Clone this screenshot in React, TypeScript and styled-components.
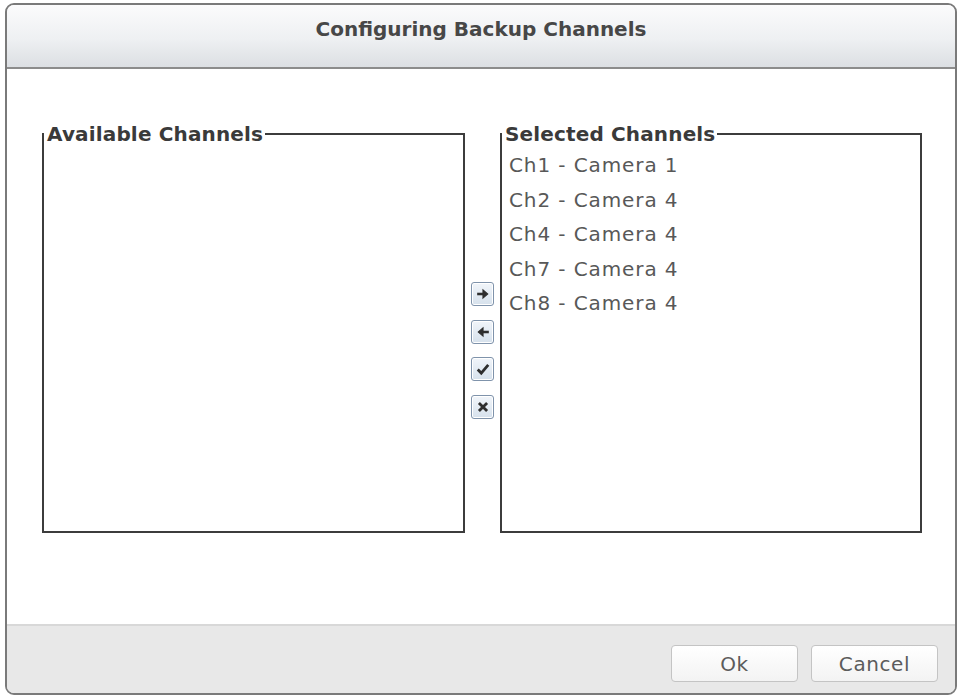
import React from 'react';
import styled, { createGlobalStyle } from 'styled-components';

const GlobalStyle = createGlobalStyle`
  html, body {
    margin: 0;
    padding: 0;
    background: #ffffff;
    font-family: "DejaVu Sans", Verdana, sans-serif;
  }
`;

const Page = styled.div`
  width: 959px;
  height: 698px;
  padding: 3px 2px 0 5px;
  box-sizing: border-box;
  overflow: hidden;
`;

const Dialog = styled.div`
  height: 692px;
  border: 2px solid #7a7a7a;
  border-radius: 9px;
  box-sizing: border-box;
  display: flex;
  flex-direction: column;
  overflow: hidden;
  background: #ffffff;
`;

const Header = styled.div`
  height: 64px;
  flex-shrink: 0;
  display: flex;
  align-items: flex-start;
  justify-content: center;
  padding-top: 12px;
  box-sizing: border-box;
  background: linear-gradient(to bottom, #fbfbfc 0%, #eef0f2 55%, #dcdfe3 100%);
  border-bottom: 2px solid #8c8c8c;
`;

const Title = styled.h1`
  margin: 0;
  font-size: 20px;
  font-weight: bold;
  color: #474747;
`;

const Body = styled.div`
  flex: 1;
  display: flex;
  align-items: flex-start;
  padding: 53px 33px 0 35px;
  gap: 6px;
`;

const Box = styled.fieldset<{ $width: number }>`
  margin: 0;
  width: ${(p) => p.$width}px;
  height: 411px;
  flex-shrink: 0;
  box-sizing: border-box;
  border: 2px solid #3c3c3c;
  padding: 0 0 0 7px;
  min-width: 0;
`;

const Legend = styled.legend`
  padding: 0 2px 0 3px;
  margin-left: -7px;
  font-size: 20px;
  font-weight: bold;
  color: #3a3a3a;
  letter-spacing: 0.15px;
`;

const ItemList = styled.ul`
  list-style: none;
  margin: 5px 0 0;
  padding: 0;
`;

const Item = styled.li`
  font-size: 20px;
  color: #585858;
  height: 34.5px;
  line-height: 28px;
  letter-spacing: 0.9px;
`;

const Mover = styled.div`
  width: 23px;
  flex-shrink: 0;
  display: flex;
  flex-direction: column;
  align-items: center;
  gap: 13.5px;
  padding-top: 160px;
`;

const MoveButton = styled.button`
  width: 23px;
  height: 24px;
  padding: 0;
  display: flex;
  align-items: center;
  justify-content: center;
  border: 1px solid #7f93ab;
  border-radius: 3px;
  background: linear-gradient(to bottom, #f1f5fa, #d6e1ec);
  box-shadow: inset 0 0 0 1px #ffffff;
  cursor: pointer;
`;

const Footer = styled.div`
  height: 69px;
  flex-shrink: 0;
  display: flex;
  justify-content: flex-end;
  align-items: flex-start;
  gap: 13px;
  padding: 19px 17px 0 0;
  box-sizing: border-box;
  background: #e8e8e8;
  border-top: 2px solid #d8d8d8;
`;

const FooterButton = styled.button`
  width: 127px;
  height: 37px;
  border: 1px solid #c4c4c4;
  border-radius: 4px;
  background: linear-gradient(to bottom, #ffffff, #f3f3f3);
  font-family: "DejaVu Sans", Verdana, sans-serif;
  font-size: 20px;
  letter-spacing: 0.6px;
  color: #5c5c5c;
  cursor: pointer;
`;

const Glyph = ({ kind }: { kind: string }) => {
  const stroke = '#2e2e2e';
  if (kind === 'right')
    return (
      <svg width="14" height="14" viewBox="0 0 12 12">
        <path d="M1 6h7" stroke={stroke} strokeWidth="2.2" />
        <path d="M6 2.5L10 6L6 9.5Z" fill={stroke} stroke={stroke} strokeWidth="1" />
      </svg>
    );
  if (kind === 'left')
    return (
      <svg width="14" height="14" viewBox="0 0 12 12">
        <path d="M4 6h7" stroke={stroke} strokeWidth="2.2" />
        <path d="M6 2.5L2 6L6 9.5Z" fill={stroke} stroke={stroke} strokeWidth="1" />
      </svg>
    );
  if (kind === 'check')
    return (
      <svg width="14" height="14" viewBox="0 0 12 12">
        <path d="M1.5 6.5L4.5 9.5L10.5 2.5" stroke={stroke} strokeWidth="2.4" fill="none" />
      </svg>
    );
  return (
    <svg width="14" height="14" viewBox="0 0 12 12">
      <path d="M2.5 2.5L9.5 9.5M9.5 2.5L2.5 9.5" stroke={stroke} strokeWidth="2.4" fill="none" />
    </svg>
  );
};

const selected = [
  'Ch1 - Camera 1',
  'Ch2 - Camera 4',
  'Ch4 - Camera 4',
  'Ch7 - Camera 4',
  'Ch8 - Camera 4',
];

const App = () => {
  return (
    <Page>
      <GlobalStyle />
      <Dialog>
        <Header>
          <Title>Configuring Backup Channels</Title>
        </Header>
        <Body>
          <Box $width={423}>
            <Legend>Available Channels</Legend>
          </Box>
          <Mover>
            {['right', 'left', 'check', 'close'].map((k) => (
              <MoveButton key={k}>
                <Glyph kind={k} />
              </MoveButton>
            ))}
          </Mover>
          <Box $width={422}>
            <Legend>Selected Channels</Legend>
            <ItemList>
              {selected.map((s) => (
                <Item key={s}>{s}</Item>
              ))}
            </ItemList>
          </Box>
        </Body>
        <Footer>
          <FooterButton>Ok</FooterButton>
          <FooterButton>Cancel</FooterButton>
        </Footer>
      </Dialog>
    </Page>
  );
};

export default App;
